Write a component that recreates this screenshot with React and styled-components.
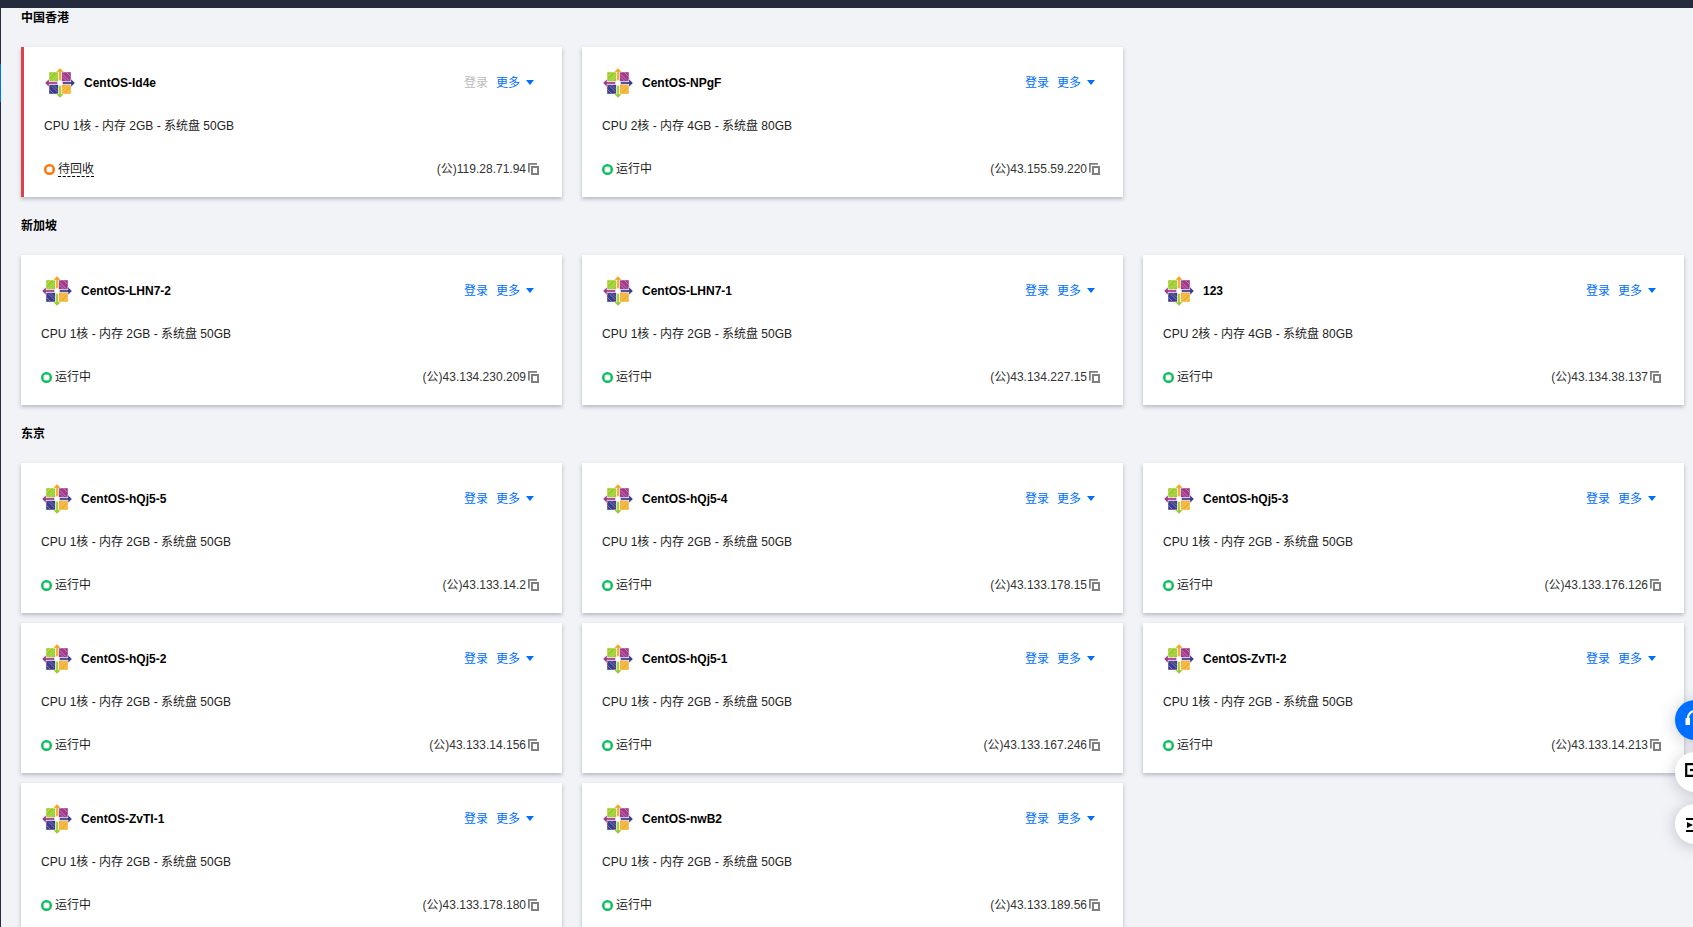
import React from 'react'
import styled, { createGlobalStyle } from 'styled-components'

const GlobalStyle = createGlobalStyle`
  html, body {
    margin: 0;
    height: 927px;
    overflow: hidden;
    background: #f1f3f7;
    font-family: "Liberation Sans", "Noto Sans CJK SC", sans-serif;
    font-size: 12px;
    color: #000;
  }
`

const TopBar = styled.div`
  height: 8px;
  background: #232b3c;
`
const Body = styled.div`
  display: flex;
  height: 919px;
`
const SideStrip = styled.div`
  width: 1px;
  background: #232b3c;
  padding-top: 56px;
  flex: none;
`
const SideMark = styled.div`
  height: 38px;
  background: #006eff;
`
const Main = styled.main`
  flex: 1;
  padding: 1px 0 0 20px;
  overflow: hidden;
`
const Section = styled.section`
  margin-bottom: 20px;
`
const Title = styled.h3`
  margin: 0 0 20px;
  font-size: 12px;
  line-height: 18px;
  font-weight: 700;
  color: #000;
`
const Grid = styled.div`
  display: grid;
  grid-template-columns: repeat(3, 541px);
  column-gap: 20px;
  row-gap: 10px;
`
const Card = styled.div`
  box-sizing: border-box;
  height: 150px;
  padding: 21px 28px 20px 20px;
  background: #fff;
  border-left: ${p => (p.$alert ? '3px solid #d5444a' : '0 none')};
  box-shadow: 0 2px 4px rgba(54, 58, 80, 0.32);
  display: flex;
  flex-direction: column;
`
const CardHead = styled.div`
  display: flex;
  align-items: center;
  height: 29px;
`
const LogoWrap = styled.span`
  display: flex;
  margin-left: 1px;
`
const Name = styled.span`
  margin-left: 9px;
  flex: 1;
  font-weight: 700;
  color: #000;
`
const Action = styled.a`
  margin-left: 8px;
  line-height: 18px;
  color: ${p => (p.$disabled ? '#bbb' : '#006eff')};
`
const Caret = styled.i`
  margin-left: 6px;
  width: 0;
  height: 0;
  border-left: 4px solid transparent;
  border-right: 4px solid transparent;
  border-top: 5px solid #006eff;
`
const Spec = styled.div`
  margin-top: 20px;
  line-height: 18px;
  color: #222;
`
const CardFoot = styled.div`
  margin-top: 25px;
  margin-right: -5px;
  display: flex;
  align-items: center;
  line-height: 18px;
`
const Dot = styled.i`
  box-sizing: border-box;
  flex: none;
  width: 11px;
  height: 11px;
  margin-right: 3px;
  border-radius: 50%;
  border: 2px solid ${p => (p.$warn ? '#ff7200' : '#0abf5b')};
  box-shadow: inset 0 0 0 0.5px ${p => (p.$warn ? '#ff7200' : '#0abf5b')};
`
const Status = styled.span`
  flex: 1;
  color: #222;
`
const Dashed = styled.span`
  border-bottom: 1px dashed #000;
`
const Ip = styled.span`
  color: #333;
  margin-right: 2px;
`
const FloatColumn = styled.div`
  position: fixed;
  left: 1675px;
  top: 700px;
  display: flex;
  flex-direction: column;
  gap: 12px;
`
const FloatButton = styled.div`
  width: 40px;
  height: 40px;
  border-radius: 50%;
  background: ${p => (p.$primary ? '#006eff' : '#fff')};
  box-shadow: 0 2px 16px rgba(54, 58, 80, 0.28);
  display: flex;
  align-items: center;
  justify-content: center;
`

const CentosLogo = () => (
  <LogoWrap>
    <svg width="30" height="30" viewBox="0 0 30 30">
      <path d="M4.200 4.200h9v9h-9z" fill="#9ccd2a" />
      <path d="M16.800 4.200h9v9h-9z" fill="#a23a8c" />
      <path d="M4.200 16.800h9v9h-9z" fill="#3c3b8c" />
      <path d="M16.800 16.800h9v9h-9z" fill="#f5b02e" />
      <path d="M15 0l4 4h-2.800v8.500h-2.400V4H11z" fill="#efa724" stroke="#fff" strokeWidth=".4" />
      <path d="M30 15l-4 4v-2.800h-8.500v-2.400H26V11z" fill="#3c3b8c" stroke="#fff" strokeWidth=".4" />
      <path d="M15 30l-4-4h2.800v-8.500h2.400V26H19z" fill="#9ccd2a" stroke="#fff" strokeWidth=".4" />
      <path d="M0 15l4-4v2.800h8.500v2.400H4V19z" fill="#a23a8c" stroke="#fff" strokeWidth=".4" />
      <g stroke="#fff" strokeWidth=".6" fill="none" opacity=".55">
        <path d="M6 12.500l6.500-6.500M4.500 8.500l4-4M8.500 13l4.500-4.500" />
        <path d="M17.500 6l6.500 6.500M17 8.500l4.500 4.500M21.500 4.500l4 4" />
        <path d="M6 17.500l6.500 6.500M4.500 21.500l4 4M8.500 17l4.500 4.500" />
        <path d="M17.500 24l6.500-6.500M17 21.500l4.500-4.500M21.500 25.500l4-4" />
      </g>
    </svg>
  </LogoWrap>
)

const CopyIcon = () => (
  <svg width="11" height="12" viewBox="0 0 11 12">
    <path d="M0.900 9.500V.900H9" fill="none" stroke="#808080" strokeWidth="1.800" />
    <path d="M4 4h6v7H4z" fill="none" stroke="#808080" strokeWidth="2" />
  </svg>
)

const Headset = () => (
  <svg width="20" height="20" viewBox="0 0 20 20">
    <path d="M3 10V8a7 7 0 0 1 14 0v2" fill="none" stroke="#fff" strokeWidth="2.200" />
    <path d="M.500 8h4.500v7H.500zM15 8h4.500v7H15z" fill="#fff" />
  </svg>
)
const DocIcon = () => (
  <svg width="20" height="20" viewBox="0 0 20 20">
    <path d="M20 2.200H1.200v11.600H20" fill="none" stroke="#000" strokeWidth="2.200" />
    <path d="M5 8h4" stroke="#000" strokeWidth="2.200" />
  </svg>
)
const ListIcon = () => (
  <svg width="20" height="20" viewBox="0 0 20 20">
    <path d="M1 5h19M1 17h19" stroke="#000" strokeWidth="2.200" />
    <path d="M2 8l6 3-6 3z" fill="#000" />
    <path d="M9 11h11" stroke="#000" strokeWidth="2.200" />
  </svg>
)

const SPEC_1 = 'CPU 1核 - 内存 2GB - 系统盘 50GB'
const SPEC_2 = 'CPU 2核 - 内存 4GB - 系统盘 80GB'

const regions = [
  {
    title: '中国香港',
    items: [
      { name: 'CentOS-Id4e', spec: SPEC_1, ip: '119.28.71.94', recycling: true },
      { name: 'CentOS-NPgF', spec: SPEC_2, ip: '43.155.59.220' },
    ],
  },
  {
    title: '新加坡',
    items: [
      { name: 'CentOS-LHN7-2', spec: SPEC_1, ip: '43.134.230.209' },
      { name: 'CentOS-LHN7-1', spec: SPEC_1, ip: '43.134.227.15' },
      { name: '123', spec: SPEC_2, ip: '43.134.38.137' },
    ],
  },
  {
    title: '东京',
    items: [
      { name: 'CentOS-hQj5-5', spec: SPEC_1, ip: '43.133.14.2' },
      { name: 'CentOS-hQj5-4', spec: SPEC_1, ip: '43.133.178.15' },
      { name: 'CentOS-hQj5-3', spec: SPEC_1, ip: '43.133.176.126' },
      { name: 'CentOS-hQj5-2', spec: SPEC_1, ip: '43.133.14.156' },
      { name: 'CentOS-hQj5-1', spec: SPEC_1, ip: '43.133.167.246' },
      { name: 'CentOS-ZvTI-2', spec: SPEC_1, ip: '43.133.14.213' },
      { name: 'CentOS-ZvTI-1', spec: SPEC_1, ip: '43.133.178.180' },
      { name: 'CentOS-nwB2', spec: SPEC_1, ip: '43.133.189.56' },
    ],
  },
]

const ServerCard = ({ item }) => (
  <Card $alert={item.recycling}>
    <CardHead>
      <CentosLogo />
      <Name>{item.name}</Name>
      <Action $disabled={item.recycling}>登录</Action>
      <Action>更多</Action>
      <Caret />
    </CardHead>
    <Spec>{item.spec}</Spec>
    <CardFoot>
      <Dot $warn={item.recycling} />
      <Status>{item.recycling ? <Dashed>待回收</Dashed> : '运行中'}</Status>
      <Ip>(公){item.ip}</Ip>
      <CopyIcon />
    </CardFoot>
  </Card>
)

export default function App() {
  return (
    <>
      <GlobalStyle />
      <TopBar />
      <Body>
        <SideStrip>
          <SideMark />
        </SideStrip>
        <Main>
          {regions.map(r => (
            <Section key={r.title}>
              <Title>{r.title}</Title>
              <Grid>
                {r.items.map(item => (
                  <ServerCard key={item.name} item={item} />
                ))}
              </Grid>
            </Section>
          ))}
        </Main>
      </Body>
      <FloatColumn>
        <FloatButton $primary><Headset /></FloatButton>
        <FloatButton><DocIcon /></FloatButton>
        <FloatButton><ListIcon /></FloatButton>
      </FloatColumn>
    </>
  )
}
